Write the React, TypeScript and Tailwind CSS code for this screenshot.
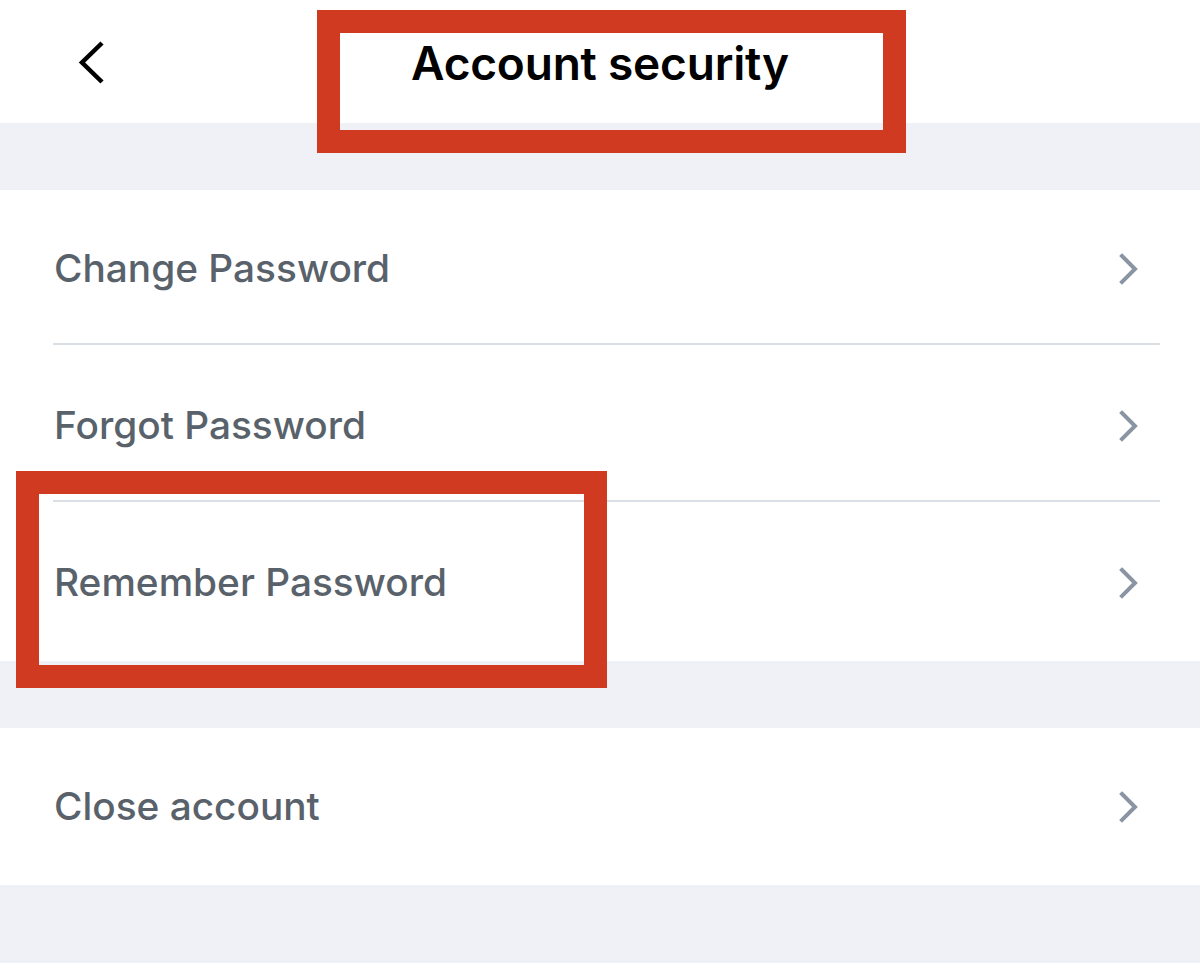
const Chevron = () => (
  <svg width="26" height="36" viewBox="0 0 26 36" fill="none">
    <path d="M6 5 L19 18 L6 31" stroke="#8995a3" strokeWidth="4" strokeLinecap="square" strokeLinejoin="miter" />
  </svg>
)

const Row = ({ label, divider }: { label: string; divider?: boolean }) => (
  <div className="relative h-[157px] flex items-center justify-between pl-[54px] pr-[58px]">
    <span className="text-[38.8px] font-medium text-[#59626b]">{label}</span>
    <Chevron />
    {divider && <div className="absolute bottom-[2px] left-[53px] right-[40px] h-[2px] bg-[#d9dfe5]" />}
  </div>
)

export default function App() {
  return (
    <div className="relative w-[1200px] h-[963px] bg-[#eff1f6] overflow-hidden" style={{ fontFamily: 'Inter, "Noto Sans", sans-serif' }}>
      <header className="h-[123px] bg-white relative">
        <svg className="absolute left-[73px] top-[39px]" width="36" height="48" viewBox="0 0 36 48" fill="none">
          <path d="M29 4 L9 23.5 L29 43" stroke="#000" strokeWidth="4.5" />
        </svg>
        <h1 className="w-full text-center text-[46px] font-semibold text-black pt-[40px] leading-none tracking-[-0.2px]">
          Account security
        </h1>
      </header>
      <div className="h-[67px]" />
      <section className="bg-white">
        <Row label="Change Password" divider />
        <Row label="Forgot Password" divider />
        <Row label="Remember Password" />
      </section>
      <div className="h-[67px]" />
      <section className="bg-white">
        <Row label="Close account" />
      </section>

      <div className="absolute left-[317px] top-[10px] w-[589px] h-[143px] border-[23px] border-[#d03a20]" />
      <div className="absolute left-[16px] top-[471px] w-[591px] h-[217px] border-[23px] border-[#d03a20]" />
    </div>
  )
}
